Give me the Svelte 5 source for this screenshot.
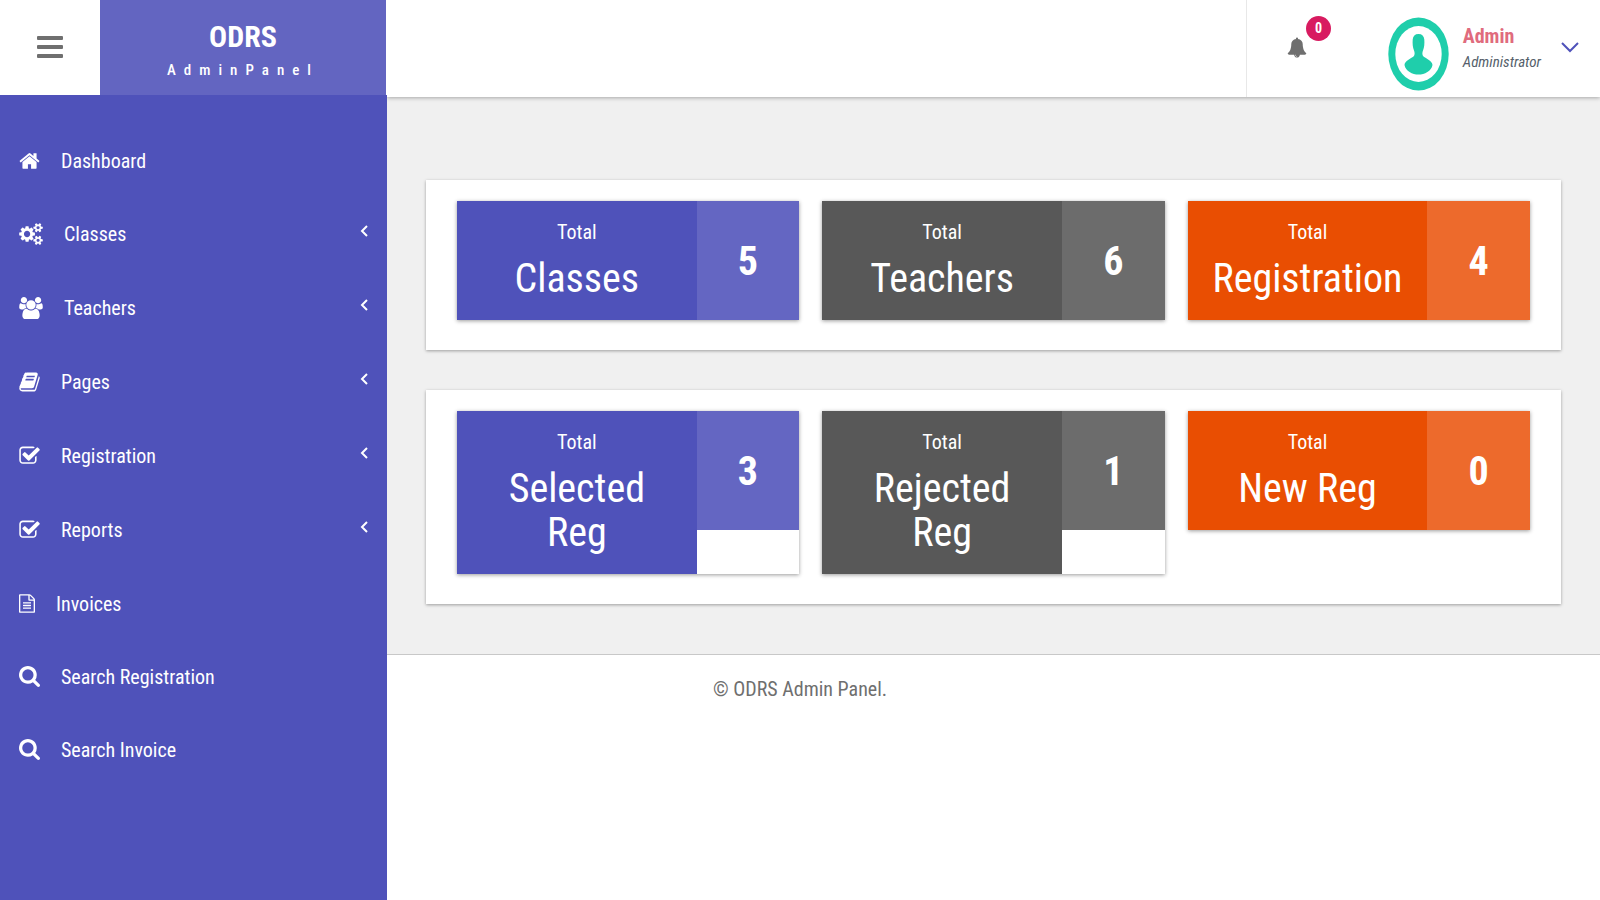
<script lang="ts">
  type MenuItem = { label: string; icon: string; sub?: boolean };
  type Stat = { label: string; value: number; tone: string };

  const icons: Record<string, { box: string; w: number; h: number; d: string }> = {
    home: {
      box: '64 0 1664 1792', w: 21, h: 22,
      d: 'M1472 992v480q0 26-19 45t-45 19h-384v-384h-256v384h-384q-26 0-45-19t-19-45v-480q0-1 .5-3t.5-3l575-474 575 474q1 2 1 6zm223-69l-62 74q-8 9-21 11h-3q-13 0-21-7l-692-577-692 577q-12 8-24 7-13-2-21-11l-62-74q-8-10-7-23.5t11-21.5l719-599q32-26 76-26t76 26l244 204v-195q0-14 9-23t23-9h192q14 0 23 9t9 23v408l219 182q10 8 11 21.5t-7 23.5z',
    },
    cogs: {
      box: '-64 0 1920 1792', w: 24, h: 22,
      d: 'M832 896q0-106-75-181t-181-75-181 75-75 181 75 181 181 75 181-75 75-181zm768 512q0-52-38-90t-90-38-90 38-38 90q0 53 37.5 90.5t90.5 37.5 90.5-37.5 37.5-90.5zm0-1024q0-52-38-90t-90-38-90 38-38 90q0 53 37.5 90.5t90.5 37.5 90.5-37.5 37.5-90.5zm-384 421v185q0 10-7 19.5t-16 10.5l-155 24q-11 35-32 76 34 48 90 115 7 11 7 20 0 12-7 19-23 30-82.5 89.5t-78.5 59.5q-11 0-21-7l-115-90q-37 19-77 31-11 108-23 155-7 24-30 24h-186q-11 0-20-7.5t-10-17.5l-23-153q-34-10-75-31l-118 89q-7 7-20 7-11 0-21-8-144-133-144-160 0-9 7-19 10-14 41-53t47-61q-23-44-35-82l-152-24q-10-1-17-9.5t-7-19.5v-185q0-10 7-19.5t16-10.5l155-24q11-35 32-76-34-48-90-115-7-11-7-20 0-12 7-20 22-30 82-89t79-59q11 0 21 7l115 90q34-18 77-32 11-108 23-154 7-24 30-24h186q11 0 20 7.5t10 17.5l23 153q34 10 75 31l118-89q8-7 20-7 11 0 21 8 144 133 144 160 0 8-7 19-12 16-42 54t-45 60q23 48 34 82l152 23q10 2 17 10.5t7 19.5zm640 533v140q0 16-149 31-12 27-30 52 51 113 51 138 0 4-4 7-122 71-124 71-8 0-46-47t-52-68q-20 2-30 2t-30-2q-14 21-52 68t-46 47q-2 0-124-71-4-3-4-7 0-25 51-138-18-25-30-52-149-15-149-31v-140q0-16 149-31 13-29 30-52-51-113-51-138 0-4 4-7 4-2 35-20t59-34 30-16q8 0 46 46.5t52 67.5q20-2 30-2t30 2q51-71 92-112l6-2q4 0 124 70 4 3 4 7 0 25-51 138 17 23 30 52 149 15 149 31zm0-1024v140q0 16-149 31-12 27-30 52 51 113 51 138 0 4-4 7-122 71-124 71-8 0-46-47t-52-68q-20 2-30 2t-30-2q-14 21-52 68t-46 47q-2 0-124-71-4-3-4-7 0-25 51-138-18-25-30-52-149-15-149-31v-140q0-16 149-31 13-29 30-52-51-113-51-138 0-4 4-7 4-2 35-20t59-34 30-16q8 0 46 46.5t52 67.5q20-2 30-2t30 2q51-71 92-112l6-2q4 0 124 70 4 3 4 7 0 25-51 138 17 23 30 52 149 15 149 31z',
    },
    users: {
      box: '64 0 1920 1792', w: 24, h: 22,
      d: 'M657 896q-162 5-265 128h-134q-82 0-138-40.5t-56-118.5q0-353 124-353 6 0 43.5 21t97.5 42.5 119 21.5q67 0 133-23-5 37-5 66 0 139 81 256zm1071 637q0 120-73 189.5t-194 69.5h-874q-121 0-194-69.5t-73-189.5q0-53 3.5-103.5t14-109 26.5-108.5 43-97.5 62-81 85.5-53.5 111.5-20q10 0 43 21.5t73 48 107 48 135 21.5 135-21.5 107-48 73-48 43-21.5q61 0 111.5 20t85.5 53.5 62 81 43 97.5 26.5 108.5 14 109 3.5 103.5zm-1024-1277q0 106-75 181t-181 75-181-75-75-181 75-181 181-75 181 75 75 181zm704 384q0 159-112.5 271.5t-271.5 112.5-271.5-112.5-112.5-271.5 112.5-271.5 271.5-112.5 271.5 112.5 112.5 271.5zm576 225q0 78-56 118.5t-138 40.5h-134q-103-123-265-128 81-117 81-256 0-29-5-66 66 23 133 23 59 0 119-21.5t97.5-42.5 43.5-21q124 0 124 353zm-128-609q0 106-75 181t-181 75-181-75-75-181 75-181 181-75 181 75 75 181z',
    },
    book: {
      box: '64 0 1664 1792', w: 21, h: 22,
      d: 'M1703 478q40 57 18 129l-275 906q-19 64-76.5 107.5t-122.5 43.5h-923q-77 0-148.5-53.5t-99.5-131.5q-24-67-2-127 0-4 3-27t4-37q1-8-3-21.5t-3-19.5q2-11 8-21t16.5-23.5 16.5-23.5q23-38 45-91.5t30-91.5q3-10 .5-30t-.5-28q3-11 17-28t17-23q21-36 42-92t25-90q1-9-2.5-32t.5-28q4-13 22-30.5t22-22.5q19-26 42.5-84.5t27.5-96.5q1-8-3-25.5t-2-26.5q2-8 9-18t18-23 17-21q8-12 16.5-30.5t15-35 16-36 19.5-32 26.5-23.5 36-11.5 47.5 5.5l-1 3q38-9 51-9h761q74 0 114 56t18 130l-274 906q-36 119-71.5 153.5t-128.5 34.5h-869q-27 0-38 15-11 16-1 43 24 70 144 70h923q29 0 56-15.5t35-41.5l300-987q7-22 5-57 38 15 59 43zm-1064 2q-4 13 2 22.5t20 9.5h608q13 0 25.5-9.5t16.5-22.5l21-64q4-13-2-22.5t-20-9.5h-608q-13 0-25.5 9.5t-16.5 22.5zm-83 256q-4 13 2 22.5t20 9.5h608q13 0 25.5-9.5t16.5-22.5l21-64q4-13-2-22.5t-20-9.5h-608q-13 0-25.5 9.5t-16.5 22.5z',
    },
    check: {
      box: '64 0 1664 1792', w: 21, h: 22,
      d: 'M1472 930v318q0 119-84.5 203.5t-203.5 84.5h-832q-119 0-203.5-84.5t-84.5-203.5v-832q0-119 84.5-203.5t203.5-84.5h832q63 0 117 25 15 7 18 23 3 17-9 29l-49 49q-10 10-23 10-3 0-9-2-23-6-45-6h-832q-66 0-113 47t-47 113v832q0 66 47 113t113 47h832q66 0 113-47t47-113v-254q0-13 9-22l64-64q10-10 23-10 6 0 12 3 20 8 20 29zm231-489l-814 814q-24 24-57 24t-57-24l-430-430q-24-24-24-57t24-57l110-110q24-24 57-24t57 24l263 263 647-647q24-24 57-24t57 24l110 110q24 24 24 57t-24 57z',
    },
    file: {
      box: '128 0 1536 1792', w: 16, h: 19,
      d: 'M1596 380q28 28 48 76t20 88v1152q0 40-28 68t-68 28h-1344q-40 0-68-28t-28-68v-1600q0-40 28-68t68-28h896q40 0 88 20t76 48zm-444-244v376h376q-10-29-22-41l-313-313q-12-12-41-22zm384 1528v-1024h-416q-40 0-68-28t-28-68v-416h-768v1536h1280zm-1024-864q0-14 9-23t23-9h704q14 0 23 9t9 23v64q0 14-9 23t-23 9h-704q-14 0-23-9t-9-23v-64zm736 224q14 0 23 9t9 23v64q0 14-9 23t-23 9h-704q-14 0-23-9t-9-23v-64q0-14 9-23t23-9h704zm0 256q14 0 23 9t9 23v64q0 14-9 23t-23 9h-704q-14 0-23-9t-9-23v-64q0-14 9-23t23-9h704z',
    },
    search: {
      box: '64 128 1664 1664', w: 21, h: 21,
      d: 'M1216 832q0-185-131.5-316.5t-316.5-131.5-316.5 131.5-131.5 316.5 131.5 316.5 316.5 131.5 316.5-131.5 131.5-316.5zm512 832q0 52-38 90t-90 38q-54 0-90-38l-343-342q-179 124-399 124-143 0-273.5-55.5t-225-150-150-225-55.5-273.5 55.5-273.5 150-225 225-150 273.5-55.5 273.5 55.5 225 150 150 225 55.5 273.5q0 220-124 399l343 343q37 37 37 90z',
    },
  };

  const menu: MenuItem[] = [
    { label: 'Dashboard', icon: 'home' },
    { label: 'Classes', icon: 'cogs', sub: true },
    { label: 'Teachers', icon: 'users', sub: true },
    { label: 'Pages', icon: 'book', sub: true },
    { label: 'Registration', icon: 'check', sub: true },
    { label: 'Reports', icon: 'check', sub: true },
    { label: 'Invoices', icon: 'file' },
    { label: 'Search Registration', icon: 'search' },
    { label: 'Search Invoice', icon: 'search' },
  ];

  const panels: Stat[][] = [
    [
      { label: 'Classes', value: 5, tone: 'primary' },
      { label: 'Teachers', value: 6, tone: 'dark' },
      { label: 'Registration', value: 4, tone: 'warning' },
    ],
    [
      { label: 'Selected Reg', value: 3, tone: 'primary' },
      { label: 'Rejected Reg', value: 1, tone: 'dark' },
      { label: 'New Reg', value: 0, tone: 'warning' },
    ],
  ];

  let notifications = $state(0);
</script>

<div class="page">
  <aside class="sidebar">
    <div class="brand-row">
      <button class="toggle" aria-label="Toggle menu">
        <svg width="26" height="22" viewBox="0 0 26 22">
          <rect width="26" height="4" rx="1" />
          <rect y="9" width="26" height="4" rx="1" />
          <rect y="18" width="26" height="4" rx="1" />
        </svg>
      </button>
      <a class="brand" href="#home">
        <strong>ODRS</strong>
        <span>AdminPanel</span>
      </a>
    </div>
    <nav>
      <ul class="menu">
        {#each menu as item (item.label)}
          {@const icon = icons[item.icon]}
          <li>
            <a href="#menu" class:has-sub={item.sub}>
              <svg width={icon.w} height={icon.h} viewBox={icon.box}><path d={icon.d} /></svg>
              <span>{item.label}</span>
              {#if item.sub}
                <svg class="angle" width="8" height="12" viewBox="0 0 8 12"><path d="M7 1 2 6l5 5" /></svg>
              {/if}
            </a>
          </li>
        {/each}
      </ul>
    </nav>
  </aside>

  <div class="body">
    <header class="topbar">
      <div class="tools">
        <button class="bell" aria-label="Notifications">
          <svg width="20" height="21" viewBox="0 0 1792 1792"><path d="M912 1696q0-16-16-16-59 0-101.5-42.5t-42.5-101.5q0-16-16-16t-16 16q0 73 51.5 124.5t124.5 51.5q16 0 16-16zm816-288q0 52-38 90t-90 38h-448q0 106-75 181t-181 75-181-75-75-181h-448q-52 0-90-38t-38-90q50-42 91-88t85-119.5 74.5-158.5 50-206 19.5-260q0-152 117-282.5t307-158.5q-8-19-8-39 0-40 28-68t68-28 68 28 28 68q0 20-8 39 190 28 307 158.5t117 282.5q0 139 19.5 260t50 206 74.5 158.5 85 119.5 91 88z" /></svg>
          <span class="badge">{notifications}</span>
        </button>
        <button class="user">
          <svg class="avatar" width="61" height="74" viewBox="0 0 61 74">
            <ellipse cx="30.5" cy="37" rx="30.2" ry="36.6" />
            <ellipse class="inner" cx="30.5" cy="37" rx="23.2" ry="28" />
            <path d="M30.5 17c3.600 0 5.500 2 5.800 5.500.3 4 0 8-1.300 11-.8 2-1 4.500.5 6 2.500 2 8.800 4.500 9 8.500-1 6-8 9.600-14 9.600s-13-3.600-14-9.600c.2-4 6.500-6.500 9-8.500 1.500-1.500 1.300-4 .5-6-1.300-3-1.600-7-1.300-11 .3-3.500 2.200-5.500 5.800-5.500z" />
          </svg>
          <span class="who">
            <strong>Admin</strong>
            <em>Administrator</em>
          </span>
          <svg class="caret" width="18" height="11" viewBox="0 0 18 11"><path d="m1 1 8 8 8-8" /></svg>
        </button>
      </div>
    </header>

    <main>
      {#each panels as panel}
        <section class="panel">
          {#each panel as stat (stat.label)}
            <div class="tile {stat.tone}">
              <div class="name">
                <h5>Total</h5>
                <h2>{stat.label}</h2>
              </div>
              <div class="value">{stat.value}</div>
            </div>
          {/each}
        </section>
      {/each}
    </main>

    <footer>© ODRS Admin Panel.</footer>
  </div>
</div>

<style>
  :global(body) {
    margin: 0;
    background: #fff;
  }
  .page {
    --side: 387px;
    display: grid;
    grid-template-columns: var(--side) 1fr;
    min-height: 100vh;
    font-family: 'Roboto Condensed', Roboto, 'Liberation Sans', sans-serif;
    font-size: 20px;
    line-height: 22px;
    color: #6f6f6f;
  }
  button {
    border: 0;
    padding: 0;
    background: none;
    font: inherit;
    cursor: pointer;
  }
  a {
    color: inherit;
    text-decoration: none;
  }
  svg {
    display: block;
    flex: none;
    fill: currentColor;
  }

  .sidebar {
    position: relative;
    z-index: 1;
    background: #4f52ba;
    color: #fff;
  }
  .brand-row {
    display: flex;
    height: 95px;
    padding-right: 1px;
    background: #fff;
  }
  .toggle {
    display: grid;
    place-items: center;
    width: 100px;
    padding-bottom: 2px;
    color: #6f6f6f;
  }
  .brand {
    flex: 1;
    padding-top: 19px;
    background: #6365c1;
    text-align: center;
  }
  .brand strong {
    display: block;
    font-size: 30px;
    line-height: 35px;
  }
  .brand span {
    display: block;
    margin-top: 6px;
    font-size: 15px;
    font-weight: 500;
    line-height: 20px;
    letter-spacing: 8px;
  }
  .menu {
    list-style: none;
    margin: 0;
    padding: 29px 0 0;
  }
  .menu a {
    display: flex;
    align-items: center;
    gap: 21px;
    height: 73px;
    padding: 0 19px;
  }
  .menu a.has-sub {
    height: 74px;
  }
  .angle {
    margin: 0 0 6px auto;
    fill: none;
    stroke: #fff;
    stroke-width: 2;
  }

  .topbar {
    position: relative;
    display: flex;
    justify-content: flex-end;
    height: 97px;
    background: #fff;
    box-shadow: 0 1px 4px rgba(0, 0, 0, 0.3);
  }
  .tools {
    display: flex;
    width: 354px;
    box-sizing: border-box;
    border-left: 1px solid #e8e8e8;
    padding: 0 21px 0 40px;
    justify-content: space-between;
  }
  .bell {
    position: relative;
    padding-bottom: 2px;
    color: #6f6f6f;
  }
  .badge {
    position: absolute;
    left: 19px;
    top: 16px;
    width: 25px;
    border-radius: 50%;
    background: #d81b60;
    color: #fff;
    font-size: 14px;
    font-weight: 700;
    line-height: 25px;
  }
  .user {
    display: flex;
    align-items: center;
    text-align: left;
  }
  .avatar {
    margin: 10px 14px 0 0;
    fill: #1fceab;
  }
  .inner {
    fill: #fff;
  }
  .who strong, .who em {
    display: block;
  }
  .who strong {
    color: #e06b7d;
  }
  .who em {
    margin-top: 4px;
    color: #555f6b;
    font-size: 15px;
  }
  .caret {
    margin: 0 0 2px 20px;
    fill: none;
    stroke: #4f52ba;
    stroke-width: 2;
  }

  main {
    display: grid;
    gap: 40px;
    padding: 83px 39px 50px;
    background: #f0f0f0;
  }
  .panel {
    display: grid;
    grid-template-columns: repeat(3, 1fr);
    align-items: start;
    gap: 23px;
    padding: 21px 31px 30px;
    background: #fff;
    box-shadow: 0 1px 3px rgba(0, 0, 0, 0.35);
  }
  .tile {
    display: grid;
    grid-template-columns: 7fr 3fr;
    align-items: start;
    box-shadow: 0 1px 4px rgba(0, 0, 0, 0.4);
    color: #fff;
    text-align: center;
  }
  .name {
    padding: 20px 20px 19px;
  }
  .name h5, .name h2 {
    margin: 0;
    font-weight: 400;
  }
  .name h5 {
    font-size: 20px;
  }
  .name h2 {
    margin-top: 14px;
    font-size: 40px;
    line-height: 44px;
  }
  .value {
    padding-top: 2px;
    font-size: 40px;
    font-weight: 700;
    line-height: 117px;
  }
  .primary .name { background: #4f52ba; }
  .primary .value { background: #6466c2; }
  .dark .name { background: #585858; }
  .dark .value { background: #6c6c6c; }
  .warning .name { background: #e94e02; }
  .warning .value { background: #ed6a2c; }

  footer {
    padding: 23px var(--side) 24px 0;
    border-top: 1px solid #c8c8c8;
    text-align: center;
  }
</style>
